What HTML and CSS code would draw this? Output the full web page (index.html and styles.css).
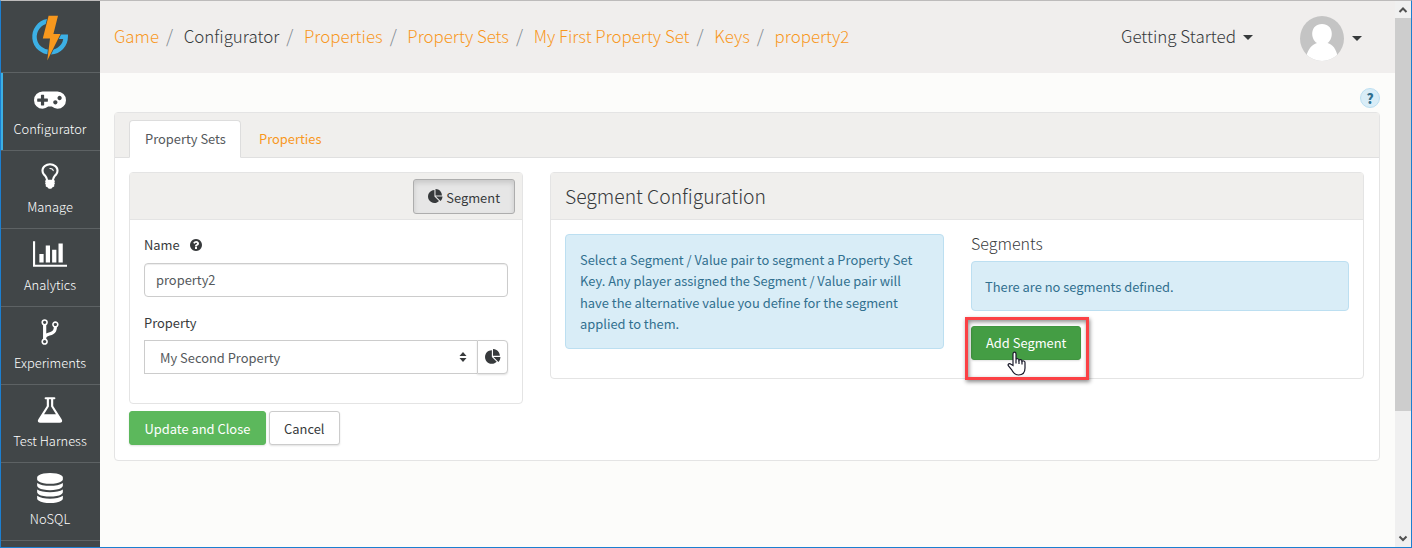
FILE: index.html
```html
<!DOCTYPE html>
<html lang="en">
<head>
<meta charset="utf-8">
<title>Configurator</title>
<link rel="stylesheet" href="styles.css">
</head>
<body>
<svg class="defs" width="0" height="0">
  <symbol id="pie" viewBox="0 0 1792 1792"><path d="M768 890l546 546q-106 108-247.500 168t-298.500 60q-209 0-385.500-103t-279.500-279.500-103-385.500 103-385.500 279.500-279.500 385.500-103v762zm187 6h773q0 157-60 298.500t-168 247.500zm709-128h-768v-768q209 0 385.500 103t279.500 279.500 103 385.500z"/></symbol>
</svg>
<div class="window">
  <nav class="sidebar">
    <a class="logo"><svg width="46" height="56" viewBox="28 10 46 56">
      <path class="ring" d="M47.500 21.300A15.600 15.600 0 1 0 65.700 36.700H57"/>
      <path class="bolt-gap" d="M48.600 15.700H58L53.400 34H60.500L47.300 60.500L50 38.500H42.800Z"/>
      <path class="bolt" d="M48.600 15.700H58L53.400 34H60.500L47.300 60.500L50 38.500H42.800Z"/>
    </svg></a>
    <a class="item active"><svg width="32" height="30" viewBox="0 0 1920 1792"><path d="M832 1088v-128q0-14-9-23t-23-9h-192v-192q0-14-9-23t-23-9h-128q-14 0-23 9t-9 23v192h-192q-14 0-23 9t-9 23v128q0 14 9 23t23 9h192v192q0 14 9 23t23 9h128q14 0 23-9t9-23v-192h192q14 0 23-9t9-23zm576 64q0-53-37.500-90.500t-90.500-37.500-90.500 37.500-37.500 90.500 37.500 90.500 90.500 37.500 90.500-37.500 37.500-90.500zm256-256q0-53-37.500-90.500t-90.500-37.500-90.500 37.500-37.500 90.500 37.500 90.500 90.500 37.500 90.500-37.500 37.500-90.500zm256 128q0 212-150 362t-362 150q-192 0-338-128h-220q-146 128-338 128-212 0-362-150t-150-362 150-362 362-150h896q212 0 362 150t150 362z"/></svg><span>Configurator</span></a>
    <a class="item"><svg width="30" height="30" viewBox="0 0 1792 1792"><path d="M1120 576q0 13-9.500 22.500t-22.500 9.500-22.500-9.500-9.500-22.500q0-46-54-71t-106-25q-13 0-22.500-9.500t-9.500-22.500 9.500-22.500 22.500-9.500q50 0 99.500 16t87 54 37.500 90zm160 0q0-72-34.500-134t-90-101.500-123-62-136.500-22.500-136.500 22.500-123 62-90 101.500-34.500 134q0 101 68 180 10 11 30.500 33t30.500 33q128 153 141 298h228q13-145 141-298 10-11 30.500-33t30.500-33q68-79 68-180zm128 0q0 155-103 268-45 49-74.500 87t-59.500 95.500-34 107.500q47 28 47 82 0 37-25 64 25 27 25 64 0 52-45 81 13 23 13 47 0 46-31.500 71t-77.500 25q-20 44-60 70t-87 26-87-26-60-70q-46 0-77.500-25t-31.500-71q0-24 13-47-45-29-45-81 0-37 25-64-25-27-25-64 0-54 47-82-4-50-34-107.500t-59.500-95.500-74.500-87q-103-113-103-268 0-99 44.500-184.500t117-142 164-89 186.500-32.500 186.500 32.500 164 89 117 142 44.500 184.500z"/></svg><span>Manage</span></a>
    <a class="item"><svg width="34" height="30" viewBox="0 0 2048 1792"><path d="M640 896v512h-256v-512h256zm384-512v1024h-256v-1024h256zm1024 1152v128h-2048v-1536h128v1408h1920zm-640-896v768h-256v-768h256zm384-384v1152h-256v-1152h256z"/></svg><span>Analytics</span></a>
    <a class="item"><svg width="30" height="30" viewBox="0 0 1792 1792"><path d="M672 1472q0-40-28-68t-68-28-68 28-28 68 28 68 68 28 68-28 28-68zm0-1152q0-40-28-68t-68-28-68 28-28 68 28 68 68 28 68-28 28-68zm640 128q0-40-28-68t-68-28-68 28-28 68 28 68 68 28 68-28 28-68zm96 0q0 52-26 96.500t-70 69.500q-2 287-226 414-67 38-203 81-128 40-169.500 71t-41.500 100v26q44 25 70 69.500t26 96.500q0 80-56 136t-136 56-136-56-56-136q0-52 26-96.500t70-69.500v-820q-44-25-70-69.500t-26-96.500q0-80 56-136t136-56 136 56 56 136q0 52-26 96.500t-70 69.500v497q54-26 154-57 55-17 87.500-29.500t70.500-31 59-39.500 40.500-51 28-69.500 8.500-91.500q-44-25-70-69.500t-26-96.500q0-80 56-136t136-56 136 56 56 136z"/></svg><span>Experiments</span></a>
    <a class="item"><svg width="30" height="30" viewBox="0 0 1792 1792"><path d="M1591 1448q56 89 21.500 152.500t-140.500 63.500h-1152q-106 0-140.500-63.500t21.500-152.500l503-793v-399h-64q-26 0-45-19t-19-45 19-45 45-19h512q26 0 45 19t19 45-19 45-45 19h-64v399zm-779-725l-272 429h712l-272-429-20-31v-436h-128v436z"/></svg><span>Test Harness</span></a>
    <a class="item"><svg width="30" height="30" viewBox="0 0 1792 1792"><path d="M896 768q237 0 443-43t325-127v170q0 69-103 128t-280 93.500-385 34.500-385-34.500-280-93.500-103-128v-170q119 84 325 127t443 43zm0 768q237 0 443-43t325-127v170q0 69-103 128t-280 93.500-385 34.500-385-34.500-280-93.500-103-128v-170q119 84 325 127t443 43zm0-384q237 0 443-43t325-127v170q0 69-103 128t-280 93.500-385 34.500-385-34.500-280-93.500-103-128v-170q119 84 325 127t443 43zm0-1152q208 0 385 34.500t280 93.500 103 128v128q0 69-103 128t-280 93.500-385 34.500-385-34.500-280-93.500-103-128v-128q0-69 103-128t280-93.500 385-34.500z"/></svg><span>NoSQL</span></a>
  </nav>
  <main class="main">
    <header class="topbar">
      <ol class="crumbs">
        <li><a>Game</a></li><li class="here">Configurator</li><li><a>Properties</a></li><li><a>Property Sets</a></li><li><a>My First Property Set</a></li><li><a>Keys</a></li><li><a>property2</a></li>
      </ol>
      <div class="started">Getting Started<i class="caret"></i></div>
      <div class="user">
        <svg width="44" height="45" viewBox="0 0 44 45"><defs><clipPath id="disc"><ellipse cx="22" cy="22.500" rx="22" ry="22.500"/></clipPath></defs><g clip-path="url(#disc)"><rect width="44" height="45" fill="#c4c4c4"/><path fill="#fff" d="M6 41C8 33 12 28.500 17 27C10 23 10 8 22 8S34 23 27.500 27C33 28.500 36 33 38 41V45H6Z"/></g></svg>
        <i class="caret"></i>
      </div>
    </header>
    <div class="content">
      <div class="help-row"><span class="help">?</span></div>
      <section class="card outer">
        <div class="tabs"><a class="tab on">Property Sets</a><a class="tab">Properties</a></div>
        <div class="columns">
          <div class="left">
            <section class="card form">
              <div class="head"><button class="btn pressed"><svg width="15" height="15"><use href="#pie"/></svg>Segment</button></div>
              <div class="fields">
                <label class="label">Name<svg width="12" height="12" viewBox="128 128 1536 1536"><path d="M1024 1376v-192q0-14-9-23t-23-9h-192q-14 0-23 9t-9 23v192q0 14 9 23t23 9h192q14 0 23-9t9-23zm256-672q0-88-55.500-163t-138.500-116-170-41q-243 0-371 213-15 24 8 42l132 100q7 6 19 6 16 0 25-12 53-68 86-92 34-24 86-24 48 0 85.500 26t37.500 59q0 38-20 61t-68 45q-63 28-115.500 86.500t-52.500 125.500v36q0 14 9 23t23 9h192q14 0 23-9t9-23q0-19 21.500-49.500t54.500-49.500q32-18 49-28.500t46-35 44.500-48 28-60.500 12.500-81zm384 192q0 209-103 385.500t-279.500 279.500-385.500 103-385.500-103-279.500-279.500-103-385.500 103-385.500 279.500-279.500 385.500-103 385.500 103 279.500 279.500 103 385.500z"/></svg></label>
                <div class="input">property2</div>
                <label class="label second">Property</label>
                <div class="group">
                  <div class="select">My Second Property<svg width="8" height="10" viewBox="0 0 8 10"><path d="M0.500 4L4 0L7.500 4ZM0.500 6L4 10L7.500 6Z"/></svg></div>
                  <button class="addon"><svg width="16" height="16"><use href="#pie"/></svg></button>
                </div>
              </div>
            </section>
            <div class="actions"><button class="btn green">Update and Close</button><button class="btn">Cancel</button></div>
          </div>
          <section class="card config">
            <div class="head"><h3>Segment Configuration</h3></div>
            <div class="split">
              <div class="alert info">Select a Segment / Value pair to segment a Property Set<br>Key. Any player assigned the Segment / Value pair will<br>have the alternative value you define for the segment<br>applied to them.</div>
              <div class="segments">
                <h4>Segments</h4>
                <div class="alert none">There are no segments defined.</div>
                <div class="add">
                  <button class="btn green hover">Add Segment</button>
                  <div class="highlight"></div>
                  <svg class="pointer" width="19" height="25" viewBox="0 0 19 25"><path d="M6 14.500V3C6 .5 9 .5 9 3V8.500C9.500 7.300 12 7.500 12 9.200C12.700 8.200 15 8.500 15 10.200C15.800 9.500 18 9.800 18 11.500V17C18 21 16 24 11.500 24C7.500 24 6 21.500 4.500 18.500L1.300 14.700C.5 13 2.500 12 4 13.200Z"/><path class="fingers" d="M9 8.500V12.500M12 9.200V13M15 10.200V13.500"/></svg>
                </div>
              </div>
            </div>
          </section>
        </div>
      </section>
    </div>
  </main>
  <div class="scrollbar">
    <svg width="16" height="17" viewBox="0 0 16 17"><path d="M4.500 11L8 7.500L11.500 11"/></svg>
    <div class="thumb"></div>
    <svg width="16" height="17" viewBox="0 0 16 17"><path d="M4.500 6.500L8 10L11.500 6.500"/></svg>
  </div>
</div>
</body>
</html>
```
FILE: styles.css
```css
* { box-sizing: border-box; }
body {
  margin: 0;
  font-family: "Noto Sans CJK SC", "Noto Sans", sans-serif;
  font-size: 12.9px;
  line-height: 21.4px;
  color: #373a3c;
  overflow: hidden;
}
.defs { position: absolute; }
svg { display: block; fill: currentColor; flex: none; }
h3, h4, ol { margin: 0; padding: 0; font-weight: 300; }

.window {
  display: flex;
  width: 1412px;
  height: 548px;
  border: 1px solid #1c7fd0;
  border-top-color: #bdbbbb;
  background: #fcfcfa;
  overflow: hidden;
}

.sidebar { width: 99px; flex: none; background: #414648; color: #fff; overflow: hidden; }
.logo { display: flex; height: 72px; padding: 9px 0 0 27px; border-bottom: 1px solid #5d6264; }
.ring { fill: none; stroke: #3cb0e5; stroke-width: 4.500; }
.bolt-gap { fill: #414648; stroke: #414648; stroke-width: 1.500; }
.bolt { fill: #f8981d; }
.item {
  display: flex;
  flex-direction: column;
  align-items: center;
  height: 78px;
  padding: 10px 1px 0 0;
  border-bottom: 1px solid #5d6264;
  font-weight: 300;
  font-size: 12.9px;
}
.item span { margin-top: 5px; }
.active { box-shadow: inset 2px 0 #3cb0e5; }

.main { flex: 1; min-width: 0; }
.topbar {
  display: flex;
  align-items: center;
  height: 72px;
  padding: 0 33px 2px 14px;
  background: #f0eeed;
  font-size: 17px;
  font-weight: 300;
}
.crumbs { display: flex; flex: 1; list-style: none; white-space: nowrap; font-size: 16.9px; }
.crumbs li + li::before { content: "/"; color: #818a91; font-size: 18px; padding: 0 10.600px 0 7px; }
.crumbs a { color: #f8981d; }
.caret { display: inline-block; border: 5px solid transparent; border-top-color: #373a3c; border-bottom: 0; margin-top: 2px; }
.started { display: flex; align-items: center; gap: 7px; margin-right: 47px; }
.user { display: flex; align-items: center; gap: 8px; padding-top: 4px; }
.user .caret { margin-top: 0; }

.content { padding: 0 15px 0 14px; }
.help-row { display: flex; justify-content: flex-end; height: 39px; padding-top: 15px; }
.help {
  width: 20px;
  height: 20px;
  border: 1px solid #bcdff1;
  border-radius: 10px;
  background: #d9edf7;
  color: #31708f;
  font-size: 13.4px;
  font-weight: 900;
  line-height: 18px;
  text-align: center;
}
.card { border: 1px solid #e4e4e4; border-radius: 4px; background: #fff; }
.outer { height: 349px; }
.tabs { display: flex; height: 45px; padding: 7px 14px 0; background: #f0efed; border-bottom: 1px solid #e0e0e0; }
.tab { height: 38px; padding: 7px 15px 0; border: 1px solid transparent; color: #f8981d; }
.tab + .tab { margin-left: 2px; }
.on { width: 112px; padding-right: 0; border-color: #ddd #ddd #fff; border-radius: 4px 4px 0 0; background: #fff; color: #55595c; }
.columns { display: flex; gap: 27px; padding: 14px 15px 0 14px; }
.left { width: 394px; flex: none; }
.form { height: 232px; }
.head { display: flex; align-items: center; height: 47px; background: #f0efed; border-bottom: 1px solid #e4e4e4; }
.form .head { justify-content: flex-end; padding-right: 7px; }
.btn {
  display: flex;
  align-items: center;
  height: 34px;
  padding: 2px 14.400px 0;
  border: 1px solid #ccc;
  border-radius: 3px;
  background: #fff;
  color: #373a3c;
  font: inherit;
  white-space: nowrap;
  box-shadow: 0 1px 2px rgba(0, 0, 0, .12);
}
.pressed { gap: 3px; height: 35px; padding: 3px 14px 0; background: #e6e6e6; border-color: #adadad; box-shadow: inset 0 3px 5px rgba(0, 0, 0, .125); }
.pressed svg { margin-top: -2px; }
.green { background: #5cb85c; border-color: #5cb85c; color: #fff; }
.hover { padding: 0 14px; background: #449d44; border-color: #419641; }
.fields { padding: 14px 14px 0; }
.label { display: flex; align-items: center; gap: 10px; height: 22px; }
.input {
  height: 34px;
  margin-top: 7px;
  padding: 5px 11px;
  border: 1px solid #ccc;
  border-radius: 4px;
  color: #55595c;
  box-shadow: inset 0 1px 1px rgba(0, 0, 0, .075);
}
.second { margin-top: 15px; }
.group { display: flex; margin-top: 6px; }
.select {
  display: flex;
  align-items: center;
  justify-content: space-between;
  flex: 1;
  height: 34px;
  padding: 2px 10px 0 15px;
  border: 1px solid #ccc;
  border-right: 0;
  color: #55595c;
}
.select svg { color: #373a3c; margin-top: -2px; }
.addon {
  display: flex;
  align-items: center;
  justify-content: center;
  width: 31px;
  padding: 0;
  border: 1px solid #ccc;
  border-radius: 0 4px 4px 0;
  background: #fff;
  color: #373a3c;
  box-shadow: 0 1px 2px rgba(0, 0, 0, .12);
}
.actions { display: flex; gap: 3px; margin-top: 7px; }

.config { flex: 1; height: 207px; }
.config .head { padding-left: 14px; }
h3 { font-size: 19.3px; line-height: 24px; }
.split { display: flex; gap: 27px; padding: 14px 14px 0; }
.alert { border: 1px solid #bcdff1; border-radius: 4px; background: #d9edf7; color: #31708f; white-space: nowrap; }
.info { width: 379px; height: 115px; padding: 14px 14px; }
.segments { flex: 1; }
h4 { height: 27px; font-size: 16px; line-height: 18px; }
.none { height: 50px; padding: 14px 13px; }
.add { position: relative; display: flex; margin-top: 15px; }
.highlight {
  position: absolute;
  left: -6px;
  top: -9px;
  width: 124px;
  height: 63px;
  border: 3px solid #fb4145;
  box-shadow: 1px 2px 4px rgba(0, 0, 0, .45), inset 1px 2px 4px rgba(0, 0, 0, .45);
}
.pointer { position: absolute; left: 36px; top: 25px; fill: #fff; stroke: #1a1a2a; stroke-width: 1.200; }
.fingers { fill: none; }

.scrollbar { display: flex; flex-direction: column; width: 16px; flex: none; background: #f0f0f0; }
.scrollbar svg { fill: none; stroke: #505050; stroke-width: 2; }
.thumb { height: 393px; margin-bottom: auto; background: #cdcdcd; }
```
